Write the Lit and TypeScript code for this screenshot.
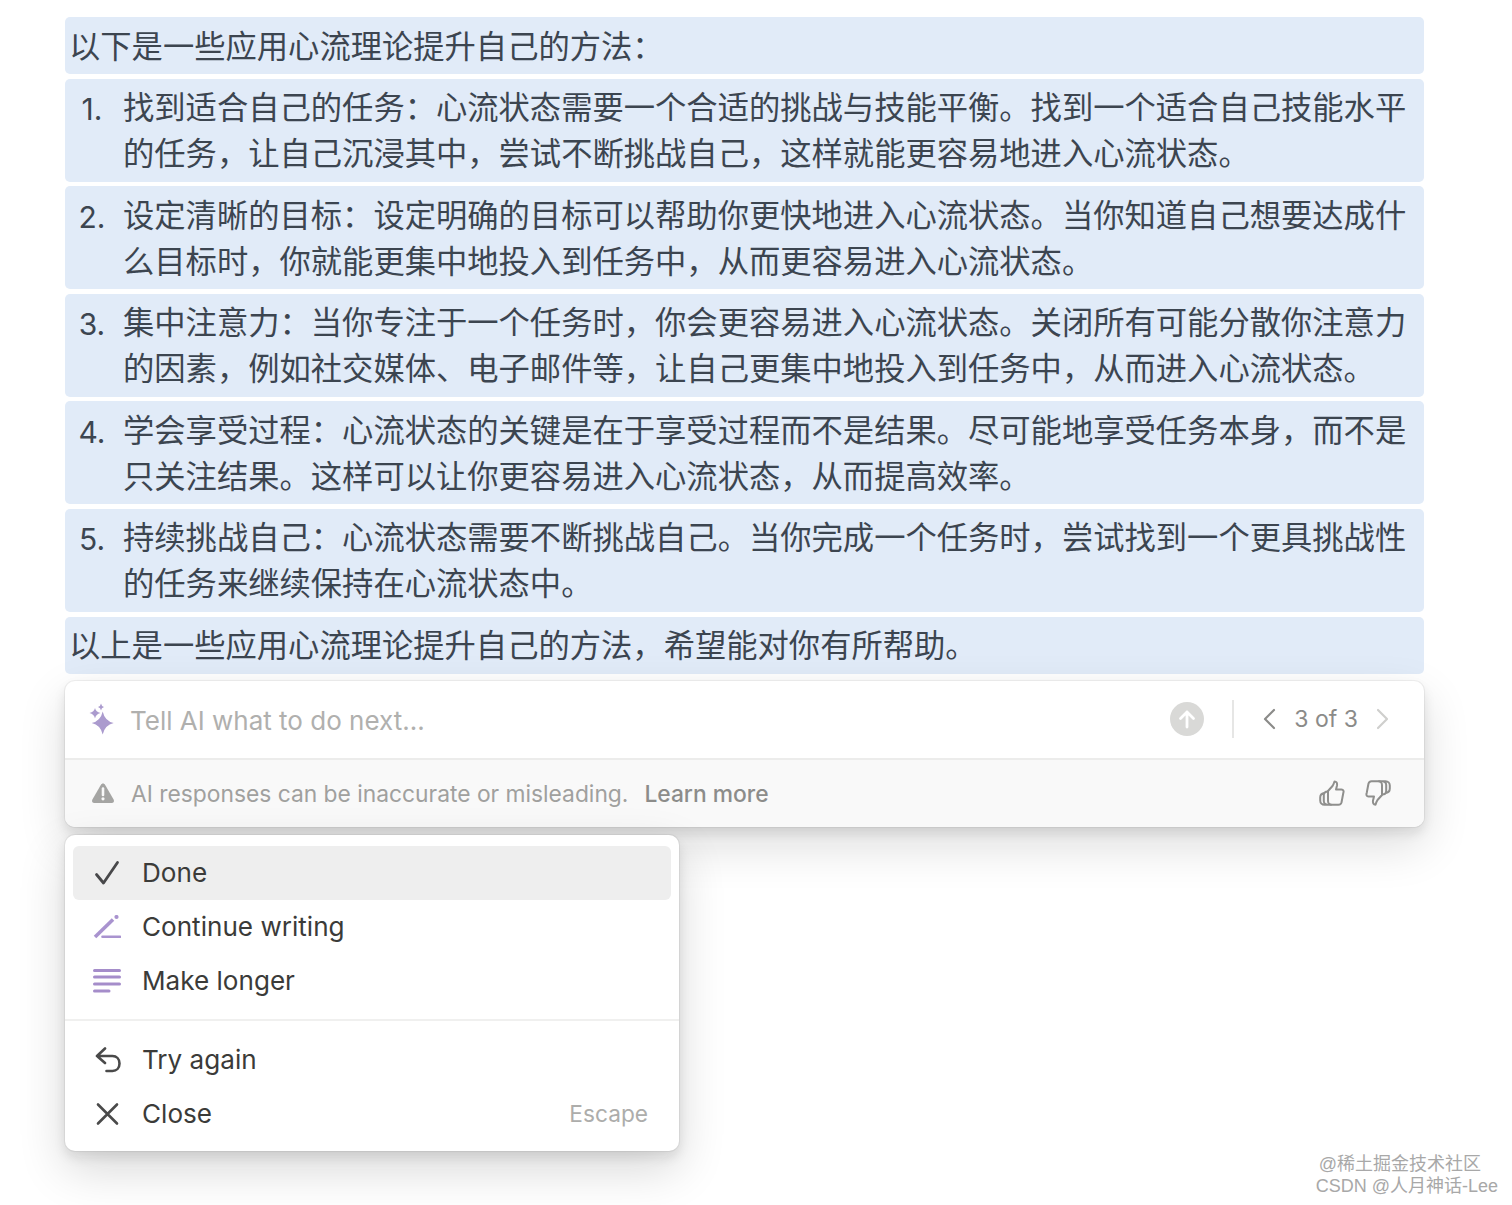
import { LitElement, html, css, svg } from "lit";
import { customElement } from "lit/decorators.js";

const items = [
  "找到适合自己的任务：心流状态需要一个合适的挑战与技能平衡。找到一个适合自己技能水平的任务，让自己沉浸其中，尝试不断挑战自己，这样就能更容易地进入心流状态。",
  "设定清晰的目标：设定明确的目标可以帮助你更快地进入心流状态。当你知道自己想要达成什么目标时，你就能更集中地投入到任务中，从而更容易进入心流状态。",
  "集中注意力：当你专注于一个任务时，你会更容易进入心流状态。关闭所有可能分散你注意力的因素，例如社交媒体、电子邮件等，让自己更集中地投入到任务中，从而进入心流状态。",
  "学会享受过程：心流状态的关键是在于享受过程而不是结果。尽可能地享受任务本身，而不是只关注结果。这样可以让你更容易进入心流状态，从而提高效率。",
  "持续挑战自己：心流状态需要不断挑战自己。当你完成一个任务时，尝试找到一个更具挑战性的任务来继续保持在心流状态中。",
];

const ic = (w: number, h: number, body: unknown) =>
  html`<svg width=${w} height=${h} viewBox="0 0 ${w} ${h}" fill="none">${body}</svg>`;

const sparkle = ic(28, 32, svg`
  <path d="M14.700 8.500 Q16.800 18 25.700 20 Q16.800 22 14.700 31.500 Q12.600 22 3.700 20 Q12.600 18 14.700 8.500Z" fill="#ab9bce"/>
  <path d="M7 5 Q7.800 9 12.500 10 Q7.800 11 7 15.500 Q6.200 11 1.500 10 Q6.200 9 7 5Z" fill="#ab9bce"/>
  <path d="M13 .5 Q13.400 3.200 16 4 Q13.400 4.800 13 7.500 Q12.600 4.800 10 4 Q12.600 3.200 13 .5Z" fill="#ab9bce"/>`);
const warn = ic(24, 22, svg`
  <path d="M12 1.500 C13 1.500 13.600 2 14.200 3 L22.600 17.400 C23.600 19.200 22.600 21 20.600 21 L3.400 21 C1.400 21 .4 19.200 1.400 17.400 L9.800 3 C10.400 2 11 1.500 12 1.500Z" fill="#a5a5a3"/>
  <path d="M12 6.500 V13" stroke="#f9f9f9" stroke-width="2.600" stroke-linecap="round"/><circle cx="12" cy="16.800" r="1.600" fill="#f9f9f9"/>`);
const up = ic(34, 34, svg`
  <circle cx="17" cy="17" r="17" fill="#d9d9d7"/>
  <path d="M17 25 V10 M10.500 16.500 L17 10 L23.500 16.500" stroke="#fff" stroke-width="2.800" stroke-linecap="round" stroke-linejoin="round"/>`);
const chevL = ic(14, 22, svg`<path d="M12 2 L3 11 L12 20" stroke="#8b8b89" stroke-width="2.200" stroke-linecap="round" stroke-linejoin="round"/>`);
const chevR = ic(14, 22, svg`<path d="M2 2 L11 11 L2 20" stroke="#cfcfcd" stroke-width="2.200" stroke-linecap="round" stroke-linejoin="round"/>`);
const thumbUp = ic(26, 26, svg`
  <path d="M9 11 L13.500 6 C14.500 4.500 15 3 15.500 1.500 C17.500 1.500 18.500 3 18 5.500 L17 9.500 H22.500 C24.500 9.500 25 11.500 24.300 13 L22.500 22.500 C22 24 21 24.800 19.500 24.800 H12.500 C10.500 24.800 9 23 9 21 Z" stroke="#8f8f8d" stroke-width="2" stroke-linejoin="round"/>
  <path d="M9 11.500 C6 11.500 4.800 13 4.800 15 V21 C4.800 23 6.500 24.800 9 24.800 M5 13 C2.500 13.500 1.200 15 1.200 17.500 V20.500 C1.200 23 3 24.800 5.500 24.800 H12" stroke="#8f8f8d" stroke-width="2" stroke-linecap="round"/>`);
const thumbDown = ic(26, 26, svg`
  <path d="M17 15 L12.500 20 C11.500 21.500 11 23 10.500 24.800 C8.500 24.800 7.500 23 8 20.500 L9 16.500 H3.500 C1.500 16.500 1 14.500 1.700 13 L3.500 3.500 C4 2 5 1.200 6.500 1.200 H13.500 C15.500 1.200 17 3 17 5 Z" stroke="#8f8f8d" stroke-width="2" stroke-linejoin="round"/>
  <path d="M17 14.500 C20 14.500 21.200 13 21.200 11 V5 C21.200 3 19.500 1.200 17 1.200 M21 13 C23.500 12.500 24.800 11 24.800 8.500 V5.500 C24.800 3 23 1.200 20.500 1.200 H14" stroke="#8f8f8d" stroke-width="2" stroke-linecap="round"/>`);
const check = ic(28, 26, svg`<path d="M3.500 14.500 L10.500 23 L24.500 2.500" stroke="#48484a" stroke-width="2.800" stroke-linecap="round" stroke-linejoin="round"/>`);
const pen = ic(28, 24, svg`
  <path d="M2 22 L20 4.500" stroke="#a993cf" stroke-width="3.600"/>
  <circle cx="23.500" cy="2" r="2.100" fill="#a993cf"/>
  <path d="M9.500 21.800 H27" stroke="#a993cf" stroke-width="2.600" stroke-linecap="round"/>`);
const lines = ic(28, 24, svg`
  <path d="M1.500 1.500 H26.500 M1.500 8 H26.500 M1.500 15 H26.500 M1.500 22 H16" stroke="#a58dca" stroke-width="3" stroke-linecap="round"/>`);
const undo = ic(28, 26, svg`
  <path d="M12 1.500 L4 9 L12 16 M4 9 H19.500 C23.500 9 26.500 12 26.500 16.500 C26.500 21 23.500 24 19.500 24 H13.500" stroke="#4a4a4a" stroke-width="2.600" stroke-linecap="round" stroke-linejoin="round"/>`);
const cross = ic(27, 24, svg`<path d="M5 2.500 L24 21.500 M24 2.500 L5 21.500" stroke="#4a4a4a" stroke-width="2.600" stroke-linecap="round"/>`);

@customElement("app-root")
export class AppRoot extends LitElement {
  static styles = css`
    :host {
      display: block;
      position: relative;
      width: 1512px;
      height: 1205px;
      overflow: hidden;
      background: #fff;
      font-family: Inter, "Noto Sans CJK SC", sans-serif;
    }
    .page {
      display: flex;
      flex-direction: column;
      padding: 17px 88px 0 65px;
    }
    .doc {
      display: flex;
      flex-direction: column;
      gap: 4.6px;
      color: #3c4550;
      font-family: "Liberation Sans", "Noto Sans CJK SC", sans-serif;
      font-size: 31.3px;
      line-height: 46px;
    }
    .block {
      background: #e1ebf8;
      border-radius: 5px;
      padding: 8px 4px 3px;
    }
    .block.last { padding: 7px 4px 4px; }
    .li {
      display: grid;
      grid-template-columns: 45px 1fr;
      padding: 7.4px 12px 3px 13px;
      height: 103px;
      box-sizing: border-box;
    }
    .num {
      font-family: Inter, sans-serif;
      font-size: 30px;
      text-align: center;
      padding-right: 17px;
    }
    .card {
      margin-top: 7px;
      height: 146px;
      background: #fff;
      border-radius: 10px;
      box-shadow: 0 0 0 1px rgba(15, 15, 15, 0.05), 0 6px 12px rgba(15, 15, 15, 0.1), 0 18px 48px rgba(15, 15, 15, 0.14);
      display: flex;
      flex-direction: column;
      overflow: hidden;
    }
    .input {
      height: 79px;
      display: flex;
      align-items: center;
      padding: 0 34px 0 23px;
      border-bottom: 2px solid #ececeb;
      box-sizing: border-box;
      flex: none;
    }
    .spark { width: 42px; display: flex; flex: none; }
    .ph { flex: 1; color: #b0b0ae; font-size: 26px; padding-top: 3px; }
    .vr { width: 2px; height: 38px; background: #e6e6e5; margin: 0 28.5px 0 28px; }
    .pager { display: flex; align-items: center; gap: 18px; color: #8b8b89; font-size: 23px; }
    .foot {
      flex: 1;
      display: flex;
      align-items: center;
      padding: 0 33px 0 26px;
      background: #f9f9f9;
      color: #a0a09e;
      font-size: 22.8px;
    }
    .warn { width: 40px; display: flex; flex: none; }
    .learn { margin-left: 16px; color: #8c8c8a; font-weight: 500; flex: 1; }
    .thumbs { display: flex; gap: 20px; }
    .menu {
      margin-top: 8px;
      width: 614px;
      height: 316px;
      background: #fff;
      border-radius: 10px;
      box-shadow: 0 0 0 1px rgba(15, 15, 15, 0.05), 0 6px 12px rgba(15, 15, 15, 0.1), 0 18px 48px rgba(15, 15, 15, 0.16);
      padding-top: 11px;
      box-sizing: border-box;
      color: #3b3b39;
      font-size: 26.1px;
    }
    .item {
      height: 54px;
      margin: 0 8px;
      padding: 0 23px 0 20px;
      border-radius: 6px;
      display: flex;
      align-items: center;
    }
    .item.on { background: #eeeeee; }
    .icon { width: 49px; flex: none; display: flex; }
    .item .label { flex: 1; }
    .esc { color: #adadab; font-size: 22.7px; }
    hr {
      border: 0;
      height: 2px;
      background: #f0f0ef;
      margin: 11px 0 12px;
    }
    .mark {
      position: absolute;
      right: 14px;
      top: 1153px;
      color: #a8a8a8;
      font-family: "Liberation Sans", "Noto Sans CJK SC", sans-serif;
      font-size: 18px;
      line-height: 22px;
      text-align: right;
    }
    .mark div:first-child { margin-right: 17px; }
  `;

  render() {
    return html`
      <div class="page">
        <div class="doc">
          <div class="block">以下是一些应用心流理论提升自己的方法：</div>
          ${items.map(
            (t, i) => html`<div class="block li"><span class="num">${i + 1}.</span><span>${t}</span></div>`
          )}
          <div class="block last">以上是一些应用心流理论提升自己的方法，希望能对你有所帮助。</div>
        </div>
        <div class="card">
          <div class="input">
            <span class="spark">${sparkle}</span>
            <span class="ph">Tell AI what to do next...</span>
            ${up}
            <span class="vr"></span>
            <span class="pager">${chevL}<span>3 of 3</span>${chevR}</span>
          </div>
          <div class="foot">
            <span class="warn">${warn}</span>
            <span>AI responses can be inaccurate or misleading.</span>
            <span class="learn">Learn more</span>
            <span class="thumbs">${thumbUp}${thumbDown}</span>
          </div>
        </div>
        <div class="menu">
          <div class="item on"><span class="icon">${check}</span><span class="label">Done</span></div>
          <div class="item"><span class="icon">${pen}</span><span class="label">Continue writing</span></div>
          <div class="item"><span class="icon">${lines}</span><span class="label">Make longer</span></div>
          <hr />
          <div class="item"><span class="icon">${undo}</span><span class="label">Try again</span></div>
          <div class="item"><span class="icon">${cross}</span><span class="label">Close</span><span class="esc">Escape</span></div>
        </div>
      </div>
      <div class="mark"><div>@稀土掘金技术社区</div><div>CSDN @人月神话-Lee</div></div>
    `;
  }
}
